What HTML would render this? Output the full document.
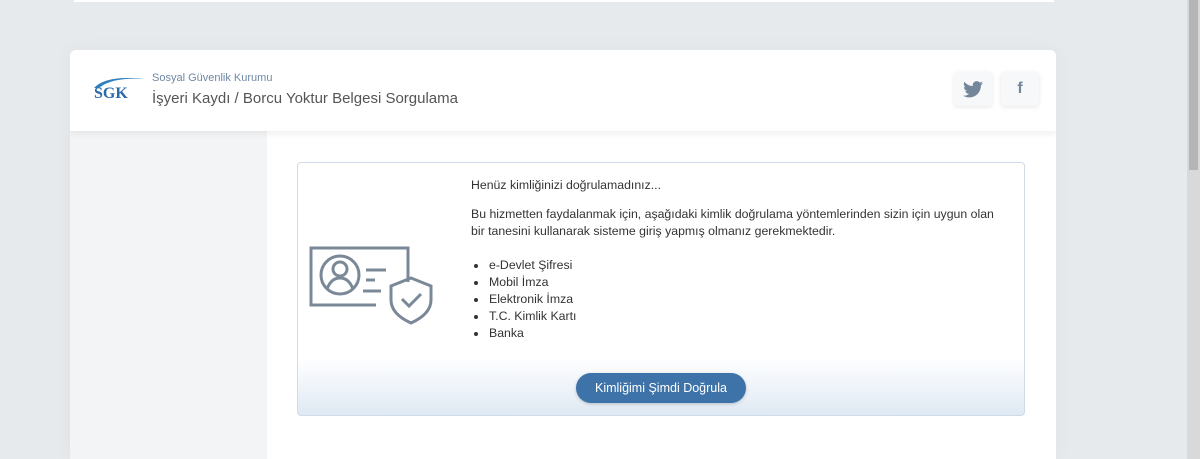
<!DOCTYPE html>
<html><head><meta charset="utf-8"><style>
*{margin:0;padding:0;box-sizing:border-box}
html,body{width:1200px;height:459px;overflow:hidden}
body{background:#e7eaed;font-family:"Liberation Sans",sans-serif;position:relative}
.top{position:absolute;left:74px;top:0;width:980px;height:2px;background:#fff}
.sb{position:absolute;left:1187px;top:0;width:13px;height:459px;background:#d9d9d9}
.sb div{position:absolute;left:2px;top:0;width:9px;height:170px;background:#b5b5b5}
.card{position:absolute;left:70px;top:50px;width:986px;height:409px;background:#fff;border-radius:6px 6px 0 0;overflow:hidden;box-shadow:0 0 20px rgba(0,0,0,.04)}
.hdr{height:81px;position:relative;box-shadow:0 3px 6px rgba(0,0,0,.06);z-index:2;background:#fff}
.left{position:absolute;left:0;top:81px;width:197px;height:330px;background:#f2f4f6}
.t1{position:absolute;left:82px;top:22px;font-size:11px;color:#6f88a3}
.t2{position:absolute;left:82px;top:40px;font-size:15px;color:#555}
.btn{position:absolute;top:22px;width:38px;height:34px;border-radius:4px;background:#f7f8f9;box-shadow:0 1px 4px rgba(0,0,0,.1);display:flex;align-items:center;justify-content:center;color:#74869a}
.panel{position:absolute;left:297px;top:162px;width:728px;height:254px;border:1px solid #cfdbe6;border-radius:4px;background:linear-gradient(#fff 0,#fff 195px,#dfe9f3 100%)}
.txt{position:absolute;left:173px;top:14px;font-size:12.3px;color:#333;line-height:17px;width:538px}
ul{list-style:none;margin-top:17px}
li{position:relative;padding-left:18px}
li:before{content:"";position:absolute;left:3px;top:7px;width:4px;height:4px;border-radius:50%;background:#333}
.go{position:absolute;left:278px;top:210px;width:170px;height:30px;border-radius:15px;background:#3d73a8;color:#fff;font-size:12.5px;text-align:center;line-height:30px;box-shadow:0 1px 3px rgba(0,0,0,.2)}
</style></head><body>
<div class="top"></div>
<div class="card">
 <div class="hdr">
  <svg style="position:absolute;left:22px;top:25px" width="54" height="28" viewBox="0 0 54 28"><path d="M2 13 Q14 0 52 4 Q20 2 7 13Z" fill="#2d7fc0"/><text x="2" y="23" font-family="Liberation Serif" font-size="16" font-weight="bold" fill="#2b6aa8">SGK</text></svg>
  <div class="t1">Sosyal Güvenlik Kurumu</div>
  <div class="t2">İşyeri Kaydı / Borcu Yoktur Belgesi Sorgulama</div>
  <div class="btn" style="left:884px"><svg width="20" height="17" viewBox="0 0 24 20"><path fill="#74869a" d="M24 2.4a10 10 0 0 1-2.8.8A5 5 0 0 0 23.3.4a10 10 0 0 1-3.1 1.2A4.9 4.9 0 0 0 11.8 6 14 14 0 0 1 1.7.9a4.9 4.9 0 0 0 1.5 6.6A4.9 4.9 0 0 1 1 6.9a4.9 4.9 0 0 0 3.9 4.8 5 5 0 0 1-2.2.1 4.9 4.9 0 0 0 4.6 3.4A9.9 9.9 0 0 1 0 17.3 14 14 0 0 0 7.5 19.5c9.1 0 14-7.5 14-14v-.6A10 10 0 0 0 24 2.4z"/></svg></div>
  <div class="btn" style="left:931px;font-weight:bold;font-size:16px">f</div>
 </div>
 <div class="left"></div>
</div>
<div class="panel">
 <svg style="position:absolute;left:10px;top:82px" width="125" height="80" viewBox="0 0 125 80" fill="none" stroke="#7a8898" stroke-width="3">
  <path d="M68 60H3V3h97v34"/>
  <circle cx="32" cy="30" r="19"/>
  <circle cx="32" cy="24" r="7"/>
  <path d="M19 44c3-8 8-11 13-11s10 3 13 11"/>
  <path d="M58 25h20M58 35h9M55 46h18"/>
  <path d="M103 33l20 8v14c0 11-9 18-20 23c-11-5-20-12-20-23V41z"/>
  <path d="M94 54l7 7 12-12"/>
 </svg>
 <div class="txt">
  <div>Henüz kimliğinizi doğrulamadınız...</div>
  <div style="margin-top:12px">Bu hizmetten faydalanmak için, aşağıdaki kimlik doğrulama yöntemlerinden sizin için uygun olan<br>bir tanesini kullanarak sisteme giriş yapmış olmanız gerekmektedir.</div>
  <ul><li>e-Devlet Şifresi</li><li>Mobil İmza</li><li>Elektronik İmza</li><li>T.C. Kimlik Kartı</li><li>Banka</li></ul>
 </div>
 <div class="go">Kimliğimi Şimdi Doğrula</div>
</div>
<div class="sb"><div></div></div>
</body></html>
